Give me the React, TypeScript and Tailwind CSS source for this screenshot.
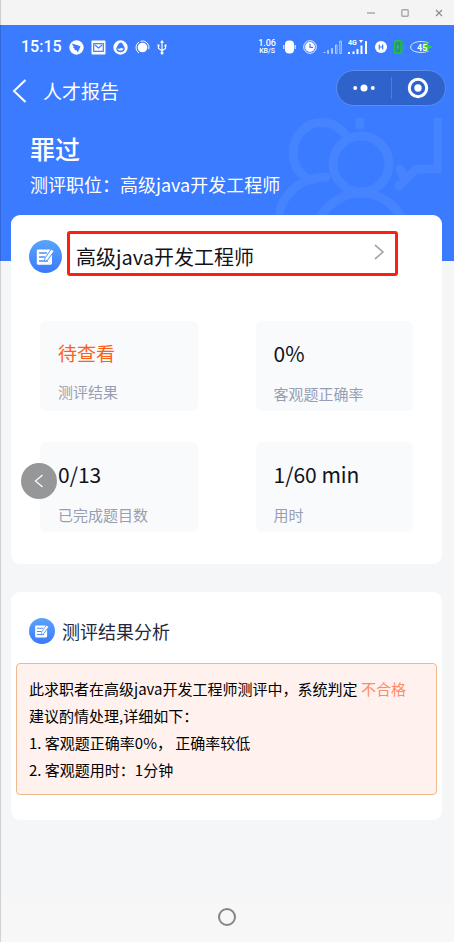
import type { ReactNode } from "react";

type Stat = {
  value: string;
  label: string;
  highlight?: boolean;
};

const stats: Stat[] = [
  { value: "待查看", label: "测评结果", highlight: true },
  { value: "0%", label: "客观题正确率" },
  { value: "0/13", label: "已完成题目数" },
  { value: "1/60 min", label: "用时" },
];

function WindowBar() {
  return (
    <div className="flex h-[25px] items-center justify-end gap-[26px] bg-[#f4f4f4] pr-[11px] text-[#a8a8a8]">
      <button aria-label="最小化">
        <svg className="block" width="8" height="8" viewBox="0 0 8 8" fill="none" stroke="currentColor">
          <path d="M0 4h8" strokeWidth="1.5" />
        </svg>
      </button>
      <button aria-label="最大化">
        <svg className="block" width="8" height="8" viewBox="0 0 8 8" fill="none" stroke="currentColor">
          <rect x=".8" y=".8" width="6.4" height="6.4" rx="1" strokeWidth="1.4" />
        </svg>
      </button>
      <button aria-label="关闭">
        <svg className="block" width="8" height="8" viewBox="0 0 8 8" fill="none" stroke="#8c8c8c">
          <path d="M1 1l6 6M7 1L1 7" strokeWidth="1.2" />
        </svg>
      </button>
    </div>
  );
}

function StatusBar() {
  return (
    <div className="flex h-11 items-center justify-between pr-5 pl-[21px] text-white">
      <div className="flex items-center gap-[7px]">
        <span className="font-[Roboto,sans-serif] text-[16px] leading-5 font-medium">15:15</span>
        <svg width="15" height="15" viewBox="0 0 15 15">
          <circle cx="7.5" cy="7.5" r="7.2" fill="#fff" />
          <path d="M3.2 3.6c2.4 1 5 1.4 8.3 2.9-.2 1.2-.9 2-1.7 2.8l.7.2L8 12.7l.3-2.1c-1.5 0-2.5-.5-3.1-1.4l1.3-.1C5 8.5 4.3 7.7 4.1 6.9l1 .1C3.9 6 3.3 4.9 3.2 3.6z" fill="#3b7bff" />
        </svg>
        <svg width="15" height="15" viewBox="0 0 15 15" fill="none">
          <rect x=".5" y=".5" width="14" height="14" rx="1" fill="#fff" />
          <rect x="2.7" y="3.7" width="9.6" height="7.6" stroke="#3b7bff" strokeWidth="1.2" />
          <path d="M4 5l3.5 3L11 5" stroke="#3b7bff" strokeWidth="1.2" />
        </svg>
        <svg width="15" height="15" viewBox="0 0 15 15">
          <circle cx="7.5" cy="7.5" r="7.2" fill="#fff" />
          <path d="M8 2.6C6.2 3 5 4.6 4.3 6.3 3.6 7.3 3 8.7 3.5 10c.8 1.5 2.3 2.2 4 2.2s3.2-.7 4-2.2c.5-1.2.2-2.4-.7-4C10.2 4.5 9.2 3.3 8 2.6z" fill="#3b7bff" />
          <path d="M4.5 8.2c1.7.9 3 .6 3.8-.4.6.7 1.4.8 2.2.4-.1 1.5-1.2 2.4-3 2.4s-2.9-.9-3-2.4z" fill="#fff" />
        </svg>
        <svg width="15" height="15" viewBox="0 0 15 15" fill="none" stroke="#fff">
          <circle cx="7.5" cy="7.5" r="4.8" fill="#fff" stroke="none" />
          <path d="M4 13A6.6 6.6 0 0 1 4 2M5.5 1.2a6.6 6.6 0 0 1 8.3 8" />
        </svg>
        <svg width="10" height="15" viewBox="0 0 10 15" fill="none" stroke="#fff" strokeWidth="1.2">
          <path d="M5 2v11M1.5 6v2.5L5 10.7l3.5-2.2V6" />
          <path d="M5 0l2 2.8H3z" fill="#fff" stroke="none" />
          <circle cx="5" cy="13" r="1.5" fill="#fff" stroke="none" />
          <path d="M.5 4.5h2v2h-2zM7.5 4.5h2v2h-2z" fill="#fff" stroke="none" />
        </svg>
      </div>

      <div className="flex items-center gap-1.5">
        <div className="flex flex-col items-center font-[Roboto,sans-serif] font-medium">
          <span className="text-[9px] leading-[8px]">1.06</span>
          <span className="text-[7px] leading-[8px]">KB/S</span>
        </div>
        <svg width="15" height="14" viewBox="0 0 15 14" fill="#fff">
          <rect x="3" y=".5" width="9" height="13" rx="4" />
          <path d="M1 5h1.5v4H1zM12.5 5H14v4h-1.5z" opacity=".7" />
        </svg>
        <svg width="14" height="14" viewBox="0 0 14 14" fill="none">
          <circle cx="7" cy="7" r="6.3" stroke="#fff" strokeWidth=".9" />
          <circle cx="7" cy="7" r="4.9" fill="#fff" />
          <path d="M7 3.8v3.5h3" stroke="#3b7bff" strokeWidth="1.2" />
        </svg>
        <svg width="19" height="14" viewBox="0 0 19 14" fill="none" stroke="#fff" strokeWidth=".8" opacity=".75">
          <path d="M.5 12.5h2M4.500 10.5h1v3h-1zM8.5 8.5h1v5h-1zM12.500 5H14v8.5h-1.500zM16.8 1h1.5v12.5h-1.500z" />
        </svg>
        <svg width="20" height="16" viewBox="0 0 20 16" fill="#fff">
          <path d="M0 13h2v2H0zM4.5 12.5h2V15h-2zM8.5 10h2v5h-2zM12.5 6.5h2V15h-2zM17 2h2v13h-2zM11 1h4l-2 3z" />
          <text x="0" y="6" fontSize="7" fontWeight="700" fontFamily="Roboto, sans-serif">4G</text>
        </svg>
        <svg width="14" height="14" viewBox="0 0 14 14" fill="none">
          <circle cx="7" cy="7" r="6" fill="#fff" />
          <path d="M5.3 4.5v5M8.7 4.5v5M5.3 7h3.4" stroke="#3b7bff" strokeWidth="1.2" />
        </svg>
        <svg width="10" height="14" viewBox="0 0 10 14" fill="none" stroke="#22c03c">
          <rect x=".8" y="1.5" width="6" height="11" strokeWidth="1.3" fill="#2b8f86" />
          <path d="M1 .6h5.6M0 13.4h7.8M7.5 1.5l1.7 1.8v7.2L7.5 12" />
          <path d="M4.2 3.8L2.4 7.3h1.4l-.4 3 2-3.6H4z" fill="#1fe33a" stroke="none" />
        </svg>
        <svg width="24" height="14" viewBox="0 0 24 14" fill="none">
          <path d="M18.5 3C12-.2 1 1.8.6 7S12 14 18.5 11" stroke="#fff" strokeWidth=".8" />
          <path d="M13 2.5h4l1 2.5 5 2-5 2-1 2.5h-4z" fill="#2bd62b" />
          <text x="7" y="10.5" fontSize="9" fontWeight="700" fontFamily="Roboto, sans-serif" fill="#fff">45</text>
        </svg>
      </div>
    </div>
  );
}

function NavBar() {
  return (
    <nav className="flex h-11 items-center pr-2 pl-[11px] text-white">
      <button aria-label="返回">
        <svg className="block" width="16" height="26" viewBox="0 0 16 26" fill="none" stroke="currentColor" strokeWidth="2">
          <path d="M14.5 2L3 13l11.5 11" />
        </svg>
      </button>
      <h1 className="ml-4 text-[19px] leading-6">人才报告</h1>
      <div className="mb-1.5 ml-auto flex h-9 w-[110px] items-center rounded-full border border-[#5c8eea] bg-[#2f63cb]">
        <button aria-label="更多" className="flex flex-1 justify-center">
          <svg className="block" width="22" height="8" viewBox="0 0 22 8" fill="currentColor">
            <circle cx="2.2" cy="4" r="2" />
            <circle cx="11" cy="4" r="3.5" />
            <circle cx="19.8" cy="4" r="2" />
          </svg>
        </button>
        <span className="h-[22px] w-px bg-[#4f7fdc]" />
        <button aria-label="关闭小程序" className="flex flex-1 justify-center">
          <svg className="block" width="22" height="22" viewBox="0 0 22 22" fill="none">
            <circle cx="11" cy="11" r="8.7" stroke="currentColor" strokeWidth="3" />
            <circle cx="11" cy="11" r="3.7" fill="currentColor" />
          </svg>
        </button>
      </div>
    </nav>
  );
}

function Watermark() {
  return (
    <svg
      className="absolute right-3 bottom-[46px]"
      width="166"
      height="97"
      viewBox="0 0 166 97"
      fill="none"
      stroke="#4583ff"
      strokeWidth="9"
      strokeLinecap="round"
      strokeLinejoin="round"
    >
      <path d="M70 18C60 3 42 1 29 10c-17 14-16 41 5 52M50 59C23 60 6 76 2 100" />
      <circle cx="85" cy="46" r="28" />
      <path d="M43 103c7-16 23-28 42-28s35 12 42 28" />
      <path d="M84-4v11M162-4v55h-22l-17 17M124 51l4 9" />
    </svg>
  );
}

function EditBadge({ className }: { className: string }) {
  return (
    <span className={`block shrink-0 rounded-full bg-linear-to-b from-[#5ba4fb] to-[#3b78fd] ${className}`}>
      <svg className="block h-full w-full" viewBox="0 0 33 33" fill="none" strokeLinecap="round">
        <path d="M9 9.5h12.5v2L17.5 17l-.5 3 2.5-1 3.5-4.5V23c0 1-.7 1.700-1.500 1.700H9c-.7 0-1.200-.5-1.200-1.200V10.700c0-.7.5-1.200 1.200-1.200z" fill="#fff" />
        <path d="M10.5 13h7M10.5 17h5M10.5 21h8" stroke="#4b8dfc" strokeWidth="1.3" />
        <path d="M22.5 9.3l2.7 1.8-6.7 9-3 1.6.5-3.3z" fill="#fff" stroke="#4b8dfc" strokeWidth=".9" />
      </svg>
    </span>
  );
}

function Card({ className, children }: { className: string; children: ReactNode }) {
  return <section className={`relative mr-3 ml-[11px] rounded-[9px] bg-white ${className}`}>{children}</section>;
}

export default function App() {
  return (
    <div className="relative flex min-h-screen flex-col bg-[#f5f6f8] font-['Noto_Sans_CJK_SC',sans-serif] text-[#111319]">
      <WindowBar />

      <header className="relative bg-[#3b7bff] pb-[65px]">
        <Watermark />
        <div className="relative">
          <StatusBar />
          <NavBar />
          <div className="px-[30px] pt-[18px] text-white">
            <h2 className="text-[25px] leading-[34px] font-medium">罪过</h2>
            <p className="mt-[7px] text-[18px] leading-6">测评职位：高级java开发工程师</p>
          </div>
        </div>
      </header>

      <main>
        <Card className="-mt-[46px] pt-4 pb-8">
          <div className="flex items-center pr-11 pl-[18px]">
            <EditBadge className="mt-1.5 size-[33px]" />
            <button className="ml-[5px] flex h-[45px] flex-1 items-center justify-between rounded-[3px] border-3 border-[#ff1f10] pr-2.5 pl-1.5 text-left">
              <span className="mt-1.5 text-[20px] leading-7">高级java开发工程师</span>
              <svg className="mb-1" width="12" height="18" viewBox="0 0 12 18" fill="none" stroke="#aaa" strokeWidth="1.7">
                <path d="M2 2l8 7-8 7" />
              </svg>
            </button>
          </div>

          <div className="mt-[45px] grid grid-cols-2 gap-x-[58px] gap-y-[31px] px-[29px]">
            {stats.map((s) => (
              <div key={s.label} className="h-[90px] rounded-md bg-[#f9fafc] pt-[17px] pl-[18px]">
                {s.highlight ? (
                  <div className="text-[19px] leading-[30px] text-[#ff5f17]">{s.value}</div>
                ) : (
                  <div className="mb-[15px] text-[21px] leading-[30px]">{s.value}</div>
                )}
                <div className="mt-[13px] text-[15px] leading-[22px] text-[#989eb1]">{s.label}</div>
              </div>
            ))}
          </div>

          {/* floating back handle, sits over the stats */}
          <button
            aria-label="返回上一页"
            className="absolute bottom-[65px] left-2.5 flex size-9 items-center justify-center rounded-full bg-[#969798] text-white"
          >
            <svg width="10" height="14" viewBox="0 0 10 14" fill="none" stroke="currentColor" strokeWidth="1.2">
              <path d="M8.5 1l-7 6 7 6" />
            </svg>
          </button>
        </Card>

        <Card className="mt-7 px-[5px] pt-[26px] pb-[25px]">
          <div className="flex items-center gap-[7px] pl-[13px]">
            <EditBadge className="size-[26px]" />
            <h3 className="text-[18px] leading-[26px] text-[#232840]">测评结果分析</h3>
          </div>
          <div className="mt-[19px] rounded-[4px] border border-[#efb98f] bg-[#fff1ed] px-3 py-[11px] text-[15px] leading-[27px] text-black">
            <p>
              此求职者在高级java开发工程师测评中，系统判定 <span className="text-[#ff8a68]">不合格</span>
            </p>
            <p>建议酌情处理,详细如下：</p>
            <p>1. 客观题正确率0%， 正确率较低</p>
            <p>2. 客观题用时：1分钟</p>
          </div>
        </Card>
      </main>

      <footer className="mt-auto flex justify-center bg-[#f7f7f7] pt-1.5 pb-4">
        <button aria-label="主页" className="size-[18px] rounded-full border-2 border-[#858585]" />
      </footer>

      {/* window edge */}
      <div className="pointer-events-none absolute inset-y-0 left-0 w-px bg-black/15" />
    </div>
  );
}
